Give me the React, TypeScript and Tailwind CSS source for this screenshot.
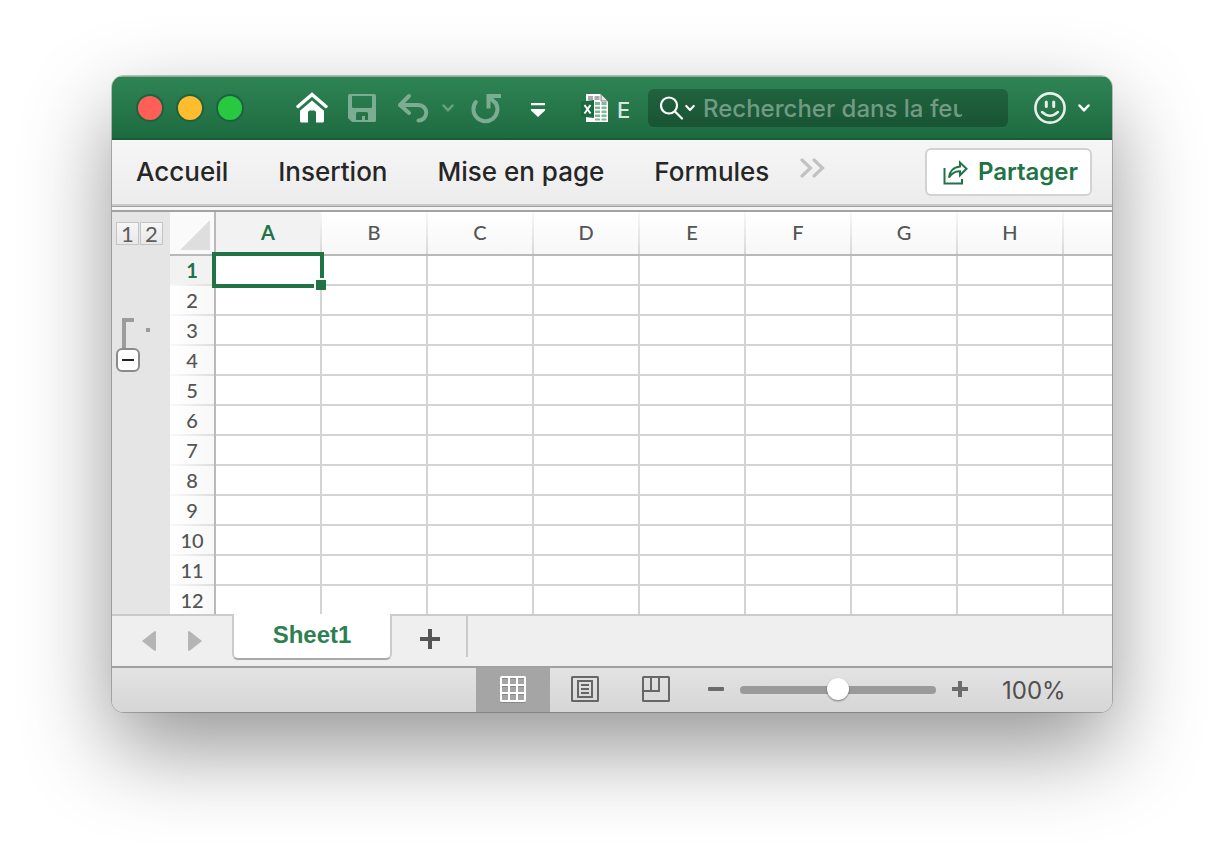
import React from "react";

const columns = ["A", "B", "C", "D", "E", "F", "G", "H"];
const rows = [1, 2, 3, 4, 5, 6, 7, 8, 9, 10, 11, 12];
const ribbonTabs = ["Accueil", "Insertion", "Mise en page", "Formules"];

function Chevron({ className, width = 2.5 }: { className: string; width?: number }) {
  return (
    <svg viewBox="0 0 12 8" className={className} fill="none" stroke="currentColor" strokeWidth={width} strokeLinecap="round" strokeLinejoin="round">
      <path d="M1.5 1.5 6 6.3 10.5 1.5" />
    </svg>
  );
}

function TitleBar() {
  return (
    <header className="flex h-16 items-center border-t border-b-2 border-t-[#7fb295] border-b-[#185c37] bg-linear-to-b from-[#2e8454] to-[#1e6b41] pl-6 text-white">
      <div className="flex shrink-0 gap-3">
        <button aria-label="Fermer" className="size-7 rounded-full border-2 border-[#1c6340] bg-[#ff5f57]" />
        <button aria-label="Réduire" className="size-7 rounded-full border-2 border-[#1c6340] bg-[#febc2e]" />
        <button aria-label="Agrandir" className="size-7 rounded-full border-2 border-[#1c6340] bg-[#28c840]" />
      </div>
      <button aria-label="Accueil" className="ml-[52px] shrink-0">
        <svg viewBox="0 0 32 32" className="size-8">
          <path d="M2 14.500 16 2.500 30 14.500" fill="none" stroke="#fff" strokeWidth="3.400" strokeLinecap="round" strokeLinejoin="miter" />
          <path d="M16 8.500 28 18.700V29Q28 30.500 26.500 30.500H20V20.500q0-2-2-2h-4q-2 0-2 2v10H5.500Q4 30.500 4 29V18.700Z" fill="#fff" />
        </svg>
      </button>
      <button aria-label="Enregistrer" className="ml-5 shrink-0 text-[#7cac91]">
        <svg viewBox="0 0 28 28" className="size-7" fill="currentColor">
          <path fillRule="evenodd" d="M1.500 0h25Q28 0 28 1.500v25Q28 28 26.500 28H4L0 24V1.500Q0 0 1.500 0ZM4 2v10.500Q4 14 5.500 14h17q1.500 0 1.500-1.500V2ZM8 26h6v-4h3v4h3v-6.500q0-1.500-1.500-1.500h-9Q8 18 8 19.500Z" />
        </svg>
      </button>
      <button aria-label="Annuler" className="ml-[22px] shrink-0 text-[#7cac91]">
        <svg viewBox="0 0 32 30" className="h-[30px] w-8" fill="none" stroke="currentColor" strokeWidth="4" strokeLinecap="round" strokeLinejoin="round">
          <path d="m11 3-9 9 9 8M2 12h18.500a7.500 7.500 0 0 1 0 15.500" />
        </svg>
      </button>
      <button aria-label="Options d’annulation" className="ml-3 shrink-0 text-[#68a081]">
        <Chevron className="h-2 w-3" />
      </button>
      <button aria-label="Rétablir" className="ml-4 shrink-0 text-[#7cac91]">
        <svg viewBox="0 0 32 32" className="size-8" fill="none" stroke="currentColor" strokeWidth="4">
          <path d="M5.800 10A12 12 0 1 0 26 11.500" strokeLinecap="round" />
          <path d="M18.500 16.500V4H31" strokeLinecap="butt" />
          <path d="m18 4 8 7.500" />
        </svg>
      </button>
      <button aria-label="Personnaliser la barre d’outils" className="mt-1 ml-[29px] shrink-0">
        <svg viewBox="0 0 14 14" className="size-3.5" fill="#fff">
          <path d="M0 0h14v2.200H0ZM0 6h14v1.500L7 14 0 7.500Z" />
        </svg>
      </button>
      <div className="ml-9 flex shrink-0 items-center gap-2">
        <svg viewBox="0 0 28 30" className="h-[30px] w-7">
          <path d="M5 1h15l7 7v21H5Z" fill="#fff" />
          <path d="M7 3h5v4H7ZM13.500 3h5v4h-5Z" fill="#a9aaa9" />
          <path d="M20 1v7h7Z" fill="#e4e4e4" stroke="#44634f" strokeWidth=".7" />
          <path d="M14 9h5v3h-5ZM20.500 9h5v3h-5ZM14 13.500h5v2.500h-5ZM20.500 13.500h5v2.500h-5ZM14 17.500h5v2.500h-5ZM20.500 17.500h5v2.500h-5ZM14 21.500h5v2.500h-5ZM20.500 21.500h5v2.500h-5ZM14 25.500h5v2h-5ZM20.500 25.500h5v2h-5Z" fill="#82b796" />
          <path d="M0 8.500 13 7v18L0 23.500Z" fill="#1c6b40" />
          <path d="m3.500 12 6 8.500M9.500 12l-6 8.500" stroke="#fff" strokeWidth="2" />
        </svg>
        <span className="mt-1 w-4 font-[family-name:Inter,sans-serif] text-[22px] leading-8 font-medium text-[#dbe8e0]">E</span>
      </div>
      <label className="ml-[15px] flex h-[38px] min-w-0 flex-1 items-center rounded-md bg-linear-to-b from-[#20633e] to-[#195434] pl-3">
        <svg viewBox="0 0 24 24" className="size-6 shrink-0" fill="none" stroke="#fff" strokeWidth="2.200" strokeLinecap="round">
          <circle cx="9" cy="9.500" r="8" />
          <path d="m15 15.500 7 7" />
        </svg>
        <Chevron className="ml-px h-2 w-2.5 shrink-0" />
        <input
          type="text"
          aria-label="Rechercher dans la feuille"
          placeholder="Rechercher dans la feuille"
          className="mt-0.5 mr-[46px] ml-2 min-w-0 flex-1 bg-transparent font-[family-name:Inter,sans-serif] text-2xl font-medium text-white outline-none placeholder:text-[#719b84]"
        />
      </label>
      <button aria-label="Commentaires" className="mr-[22px] ml-[26px] flex shrink-0 items-center gap-3">
        <svg viewBox="0 0 32 32" className="size-8" fill="none" stroke="#e8efeb" strokeLinecap="round">
          <circle cx="16" cy="16" r="14.600" strokeWidth="2.600" />
          <path d="M12.300 10v4.500M19.700 10v4.500" strokeWidth="3" />
          <path d="M8 20q8 7.500 16 0" strokeWidth="2.400" />
        </svg>
        <Chevron className="h-2 w-3" />
      </button>
    </header>
  );
}

function Ribbon() {
  return (
    <nav className="flex h-[72px] items-start border-b-2 border-b-[#a3a3a3] bg-[#f6f6f6]">
      <div className="flex h-[66px] w-full items-start border-b-2 border-[#c9c9c9] bg-linear-to-b from-[#f6f6f6] to-[#ececec] shadow-[0_1px_0_#a0a0a0]">
        <div className="flex h-[62px] gap-[50px] pl-6 font-[family-name:Inter,sans-serif] text-[26px] font-medium text-[#262626]">
          {ribbonTabs.map((tab) => (
            <button key={tab} className="whitespace-nowrap">{tab}</button>
          ))}
        </div>
        <button aria-label="Plus d’onglets" className="mt-[18px] ml-[30px] text-[#c2c2c2]">
          <svg viewBox="0 0 26 20" className="h-5 w-[26px]" fill="none" stroke="currentColor" strokeWidth="3.200" strokeLinecap="round">
            <path d="m3 2 8.500 8L3 18M15 2l8.500 8-8.500 8" />
          </svg>
        </button>
        <button className="mt-2 mr-5 ml-auto flex h-12 items-center gap-2.5 rounded-md border-2 border-[#d2d2d2] bg-white pr-3 pl-4 font-[family-name:Inter,sans-serif] text-2xl font-semibold text-[#217346]">
          <svg viewBox="0 0 25 25" className="size-[25px]" fill="none" stroke="#217346" strokeWidth="2">
            <path d="M1.500 8v15.500H19V19" />
            <path d="M6 17.500C6.500 11.500 10.500 7 17 6.500V2.500l6.500 6.300-6.500 6.500v-4C12.500 11 9 13 6 17.500Z" />
          </svg>
          Partager
        </button>
      </div>
    </nav>
  );
}

function Outline() {
  return (
    <aside className="w-[58px] shrink-0 bg-[#e5e5e5] pt-2.5 pl-1 font-[family-name:Lato,sans-serif] text-[22px] text-[#5c5c5c]">
      <div className="flex gap-px">
        <button className="flex size-[23px] items-center justify-center border border-[#c4c4c4] bg-linear-to-b from-[#f6f6f6] to-[#e8e8e8]">1</button>
        <button className="flex size-[23px] items-center justify-center border border-[#c4c4c4] bg-linear-to-b from-[#f6f6f6] to-[#e8e8e8]">2</button>
      </div>
      <svg viewBox="0 0 36 30" className="mt-[73px] h-[30px] w-9" fill="#9c9c9c">
        <path d="M6 0h12v4h-8v26H6ZM30 10h4v4h-4Z" />
      </svg>
      <button aria-label="Réduire le groupe" className="flex size-6 items-center justify-center rounded-md border-2 border-[#8c8c8c] bg-white">
        <span className="h-0.5 w-3 bg-[#222]" />
      </button>
    </aside>
  );
}

function Grid() {
  return (
    <div className="min-w-0 flex-1 overflow-hidden">
      <table className="w-full table-fixed border-separate border-spacing-0 bg-white font-[family-name:Lato,sans-serif] text-xl leading-6 text-[#555]">
        <colgroup>
          <col className="w-[46px]" />
          {columns.map((c) => (
            <col key={c} className="w-[106px]" />
          ))}
          <col />
        </colgroup>
        <thead>
          <tr className="h-11">
            <th aria-label="Tout sélectionner" className="border-r-2 border-b-2 border-[#b9b9b9] bg-[#fafafa] p-0">
              <svg viewBox="0 0 44 42" className="h-[42px] w-11">
                <path d="M10 38 40 8v30Z" fill="#dedede" />
              </svg>
            </th>
            {columns.map((c) => (
              <th
                key={c}
                scope="col"
                className={
                  c === "A"
                    ? "border-b-2 border-b-[#b9b9b9] bg-[#f2f2f2] p-0 font-bold text-[#217346]"
                    : "border-b-2 border-b-[#b9b9b9] bg-linear-to-b from-white to-[#f7f7f7] p-0 font-medium"
                }
              >
                <div className="flex h-[42px] items-center">
                  <span className="flex-1 pb-0.5 text-center">{c}</span>
                  <span className="h-full w-0.5 bg-linear-to-b from-[#f8f8f8] to-[#d8d8d8]" />
                </div>
              </th>
            ))}
            <th className="border-b-2 border-b-[#b9b9b9] bg-linear-to-b from-white to-[#f7f7f7] p-0" />
          </tr>
        </thead>
        <tbody>
          {rows.map((r) => (
            <tr key={r} className="h-[30px] last:h-7">
              <th
                scope="row"
                className={
                  r === 1
                    ? "border-r-2 border-r-[#b9b9b9] bg-[#f2f2f2] p-0 font-bold text-[#217346]"
                    : "border-r-2 border-r-[#b9b9b9] bg-linear-to-r from-white to-[#f8f8f8] p-0 font-medium"
                }
              >
                <div className="flex h-7 items-center justify-center">{r}</div>
                {r < 12 && <div className="h-0.5 bg-linear-to-r from-[#fafafa] to-[#dedede]" />}
              </th>
              {columns.map((c) => (
                <td key={c} className={r < 12 ? "relative border-r-2 border-b-2 border-[#d4d4d4] p-0" : "border-r-2 border-[#d4d4d4] p-0"}>
                  {r === 1 && c === "A" && (
                    <div className="absolute -inset-1 z-10 border-4 border-[#217346]">
                      <span className="absolute -right-1.5 -bottom-1.5 size-3 border-t-2 border-l-2 border-white bg-[#217346]" />
                    </div>
                  )}
                </td>
              ))}
              <td className={r < 12 ? "border-b-2 border-[#d4d4d4] p-0" : "p-0"} />
            </tr>
          ))}
        </tbody>
      </table>
    </div>
  );
}

function SheetTabs() {
  return (
    <div className="flex h-[52px] items-start border-t-2 border-[#cbcbcb] bg-[#efefef] text-[#b5b5b5]">
      <button aria-label="Feuille précédente" className="mt-[15px] ml-[30px]">
        <svg viewBox="0 0 14 20" className="h-5 w-3.5" fill="currentColor"><path d="M0 10 12 .5Q14-.5 14 1v18q0 1.500-2 .5Z" /></svg>
      </button>
      <button aria-label="Feuille suivante" className="mt-[15px] ml-8">
        <svg viewBox="0 0 14 20" className="h-5 w-3.5" fill="currentColor"><path d="M14 10 2 .5Q0-.5 0 1v18q0 1.500 2 .5Z" /></svg>
      </button>
      <button className="relative -mt-0.5 ml-[30px] flex h-[46px] w-40 items-center justify-center rounded-b-md border-x-2 border-b-2 border-x-[#cbcbcb] border-b-[#a8a8a8] bg-white pb-0.5 font-[family-name:Liberation_Sans,sans-serif] text-2xl font-bold text-[#2c8051]">
        Sheet1
      </button>
      <button aria-label="Nouvelle feuille" className="mt-[13px] ml-7">
        <svg viewBox="0 0 20 20" className="size-5" fill="#555"><path d="M8 0h4v8h8v4h-8v8H8v-8H0V8h8Z" /></svg>
      </button>
      <div className="ml-[26px] h-[41px] w-0.5 bg-[#cbcbcb]" />
    </div>
  );
}

function StatusBar() {
  return (
    <footer className="flex h-[46px] items-stretch justify-end border-t-2 border-[#a0a0a0] bg-linear-to-b from-[#e3e3e3] to-[#d6d6d6]">
      <button aria-label="Normal" className="flex w-[74px] items-center justify-center bg-[#a5a5a5] pb-0.5">
        <svg viewBox="0 0 26 26" className="size-[26px] drop-shadow-[0_1px_0_#888]" fill="none" stroke="#fff" strokeWidth="2">
          <rect x="1" y="1" width="24" height="24" rx=".5" />
          <path d="M9 1v24M17 1v24M1 9h24M1 17h24" />
        </svg>
      </button>
      <button aria-label="Mise en page" className="flex w-[70px] items-center justify-center pb-0.5">
        <svg viewBox="0 0 28 26" className="h-[26px] w-7" fill="none" stroke="#666" strokeWidth="2">
          <rect x="1" y="1" width="26" height="24" rx=".5" />
          <path d="M7 5h14v16H7ZM10 9h8M10 13h8M10 17h8" />
        </svg>
      </button>
      <button aria-label="Aperçu des sauts de page" className="flex w-[72px] items-center justify-center pb-0.5">
        <svg viewBox="0 0 28 26" className="h-[26px] w-7" fill="none" stroke="#666" strokeWidth="2">
          <rect x="1" y="1" width="26" height="24" rx=".5" />
          <path d="M1 15h16V1M9 1v14" />
        </svg>
      </button>
      <button aria-label="Zoom arrière" className="flex w-12 items-center justify-center pb-0.5">
        <span className="h-1 w-4 rounded-[1px] bg-[#6b6b6b]" />
      </button>
      <input
        type="range"
        aria-label="Zoom"
        min={0}
        max={200}
        defaultValue={100}
        className="w-[196px] appearance-none bg-transparent [&::-webkit-slider-runnable-track]:h-2 [&::-webkit-slider-runnable-track]:rounded-full [&::-webkit-slider-runnable-track]:bg-[#9a9a9a] [&::-webkit-slider-thumb]:-mt-2 [&::-webkit-slider-thumb]:size-[22px] [&::-webkit-slider-thumb]:appearance-none [&::-webkit-slider-thumb]:rounded-full [&::-webkit-slider-thumb]:bg-white [&::-webkit-slider-thumb]:shadow-[0_1px_2px_#0007]"
      />
      <button aria-label="Zoom avant" className="flex w-12 items-center justify-center pb-0.5">
        <svg viewBox="0 0 16 16" className="size-4" fill="#6b6b6b"><path d="M6 0h4v6h6v4h-6v6H6v-6H0V6h6Z" /></svg>
      </button>
      <span className="flex w-32 items-center pt-0.5 pl-[18px] font-[family-name:Inter,sans-serif] text-2xl text-[#4f4f4f]">100%</span>
    </footer>
  );
}

export default function App() {
  return (
    <div className="min-h-screen bg-white px-28 pt-[76px] pb-[148px]">
      <main className="rounded-xl shadow-[0_0_0_1px_rgba(0,0,0,0.22),0_36px_88px_rgba(0,0,0,0.42)]">
        <div className="overflow-hidden rounded-[11px]">
          <TitleBar />
          <Ribbon />
          <div className="flex">
            <Outline />
            <Grid />
          </div>
          <SheetTabs />
          <StatusBar />
        </div>
      </main>
    </div>
  );
}
